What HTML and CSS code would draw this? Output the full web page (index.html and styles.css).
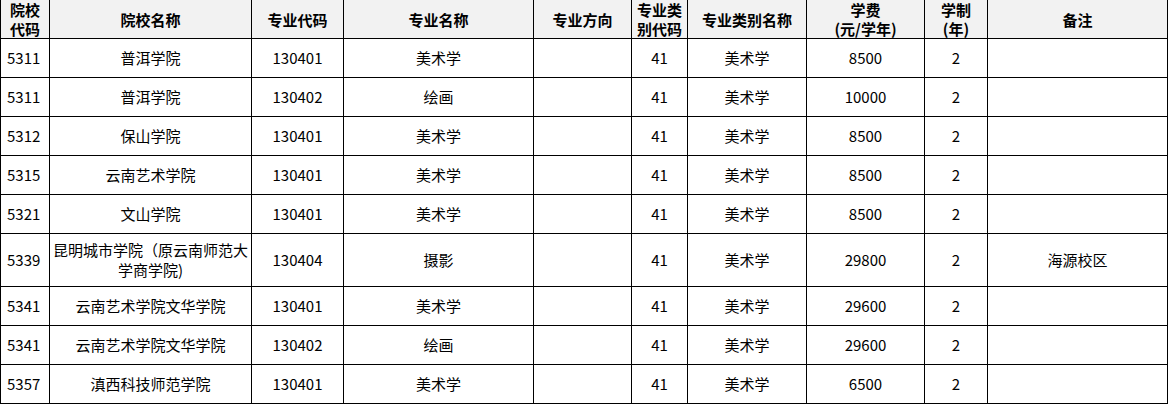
FILE: index.html
```html
<!DOCTYPE html>
<html lang="zh-CN">
<head>
<meta charset="utf-8">
<title>招生专业表</title>
<link rel="stylesheet" href="styles.css">
</head>
<body>
<table class="grid">
  <colgroup>
    <col class="c1"><col class="c2"><col class="c3"><col class="c4"><col class="c5">
    <col class="c6"><col class="c7"><col class="c8"><col class="c9"><col class="c10">
  </colgroup>
  <thead>
    <tr class="head">
      <th>院校<br>代码</th>
      <th>院校名称</th>
      <th>专业代码</th>
      <th>专业名称</th>
      <th>专业方向</th>
      <th>专业类<br>别代码</th>
      <th>专业类别名称</th>
      <th>学费<br>(元/学年)</th>
      <th>学制<br>(年)</th>
      <th>备注</th>
    </tr>
  </thead>
  <tbody>
    <tr><td class="code">5311</td><td>普洱学院</td><td>130401</td><td>美术学</td><td></td><td>41</td><td>美术学</td><td>8500</td><td>2</td><td></td></tr>
    <tr><td class="code">5311</td><td>普洱学院</td><td>130402</td><td>绘画</td><td></td><td>41</td><td>美术学</td><td>10000</td><td>2</td><td></td></tr>
    <tr><td class="code">5312</td><td>保山学院</td><td>130401</td><td>美术学</td><td></td><td>41</td><td>美术学</td><td>8500</td><td>2</td><td></td></tr>
    <tr><td class="code">5315</td><td>云南艺术学院</td><td>130401</td><td>美术学</td><td></td><td>41</td><td>美术学</td><td>8500</td><td>2</td><td></td></tr>
    <tr><td class="code">5321</td><td>文山学院</td><td>130401</td><td>美术学</td><td></td><td>41</td><td>美术学</td><td>8500</td><td>2</td><td></td></tr>
    <tr class="tall"><td class="code">5339</td><td class="wrap">昆明城市学院（原云南师范大<br>学商学院)</td><td>130404</td><td>摄影</td><td></td><td>41</td><td>美术学</td><td>29800</td><td>2</td><td>海源校区</td></tr>
    <tr><td class="code">5341</td><td>云南艺术学院文华学院</td><td>130401</td><td>美术学</td><td></td><td>41</td><td>美术学</td><td>29600</td><td>2</td><td></td></tr>
    <tr><td class="code">5341</td><td>云南艺术学院文华学院</td><td>130402</td><td>绘画</td><td></td><td>41</td><td>美术学</td><td>29600</td><td>2</td><td></td></tr>
    <tr><td class="code">5357</td><td>滇西科技师范学院</td><td>130401</td><td>美术学</td><td></td><td>41</td><td>美术学</td><td>6500</td><td>2</td><td></td></tr>
  </tbody>
</table>
</body>
</html>
```
FILE: styles.css
```css
html, body {
  margin: 0;
  padding: 0;
  background: #ffffff;
}
body {
  font-family: "Microsoft YaHei", "Noto Sans CJK SC", "Noto Sans", sans-serif;
  font-size: 15px;
  color: #000;
}
.grid {
  border-collapse: collapse;
  table-layout: fixed;
  width: 1167px;
}
.c1 { width: 49px; }
.c2 { width: 202px; }
.c3 { width: 92px; }
.c4 { width: 190px; }
.c5 { width: 98px; }
.c6 { width: 56px; }
.c7 { width: 119px; }
.c8 { width: 118px; }
.c9 { width: 63px; }
.c10 { width: 180px; }
.grid th, .grid td {
  border: 1px solid #000;
  padding: 0 2px;
  text-align: center;
  vertical-align: middle;
  line-height: 20px;
  white-space: nowrap;
  overflow: hidden;
}
.grid thead th {
  border-top: none;
  background: #f2f2f2;
  font-weight: bold;
  line-height: 19px;
  height: 38px;
}
.grid tbody td {
  height: 38px;
  font-weight: normal;
}
.grid tbody tr.tall td {
  height: 52px;
}
.grid td.code {
  text-align: left;
  padding-left: 6px;
}
.grid td.wrap {
  padding: 0 1px;
}
```
